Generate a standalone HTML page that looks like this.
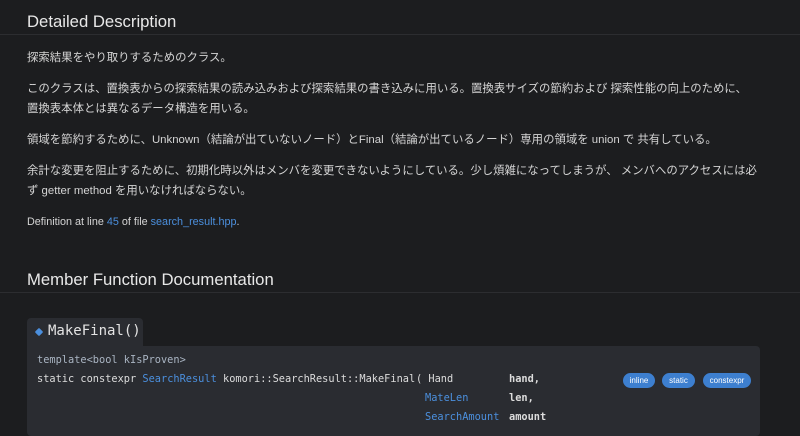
<!DOCTYPE html>
<html><head><meta charset="utf-8"><style>
body{margin:0;width:800px;height:421px;overflow:hidden;background:#1c1d1f;color:#d6d6d6;font-family:"Liberation Sans","Noto Sans CJK JP",sans-serif;position:relative}
.h{position:absolute;left:27px;font-size:16.7px;color:#e8e8e8}
.hl{position:absolute;left:0;width:800px;height:1px;background:#2c2d30}
.p{position:absolute;left:27px;font-size:11.4px;line-height:20px;color:#d4d4d4;white-space:nowrap}
a{color:#4b8fdd;text-decoration:none}
.tab{position:absolute;left:27px;top:318px;width:116px;height:29px;background:#2a2c31;border-radius:4px 4px 0 0;font-family:"DejaVu Sans Mono",monospace;font-size:14px;color:#e4e4e4}
.card{position:absolute;left:27px;top:346px;width:733px;height:90px;background:#2a2c31;border-radius:0 4px 4px 4px}
.m{position:absolute;font-family:"DejaVu Sans Mono",monospace;font-size:10.3px;color:#dcdcdc;white-space:pre}
.b{color:#4b8fdd}
.bd{position:absolute;top:373px;height:15px;border-radius:8px;background:#3d7fcf;color:#fff;font-size:8px;line-height:15px;text-align:center}
</style></head><body>
<div class="h" style="top:12px">Detailed Description</div>
<div class="hl" style="top:34px"></div>
<div class="p" style="top:48px">探索結果をやり取りするためのクラス。</div>
<div class="p" style="top:79px">このクラスは、置換表からの探索結果の読み込みおよび探索結果の書き込みに用いる。置換表サイズの節約および 探索性能の向上のために、<br>置換表本体とは異なるデータ構造を用いる。</div>
<div class="p" style="top:130px">領域を節約するために、Unknown（結論が出ていないノード）とFinal（結論が出ているノード）専用の領域を union で 共有している。</div>
<div class="p" style="top:161px">余計な変更を阻止するために、初期化時以外はメンバを変更できないようにしている。少し煩雑になってしまうが、 メンバへのアクセスには必<br>ず getter method を用いなければならない。</div>
<div class="p" style="top:212px;font-size:10.8px">Definition at line <a>45</a> of file <a>search_result.hpp</a>.</div>
<div class="h" style="top:270px">Member Function Documentation</div>
<div class="hl" style="top:292px"></div>
<div class="tab"><span style="position:absolute;left:9px;top:11px;width:6px;height:6px;background:#4b8fdd;transform:rotate(45deg);border-radius:1px"></span><span style="position:absolute;left:21px;top:5px">MakeFinal()</span></div>
<div class="card"></div>
<div class="m" style="left:37px;top:354px;color:#a9b4c2">template&lt;bool kIsProven&gt;</div>
<div class="m" style="left:37px;top:373px">static constexpr <span class="b">SearchResult</span> komori::SearchResult::MakeFinal</div>
<div class="m" style="left:416px;top:373px">( Hand</div>
<div class="m" style="left:509px;top:373px;font-weight:bold">hand,</div>
<div class="m b" style="left:425px;top:392px">MateLen</div>
<div class="m" style="left:509px;top:392px;font-weight:bold">len,</div>
<div class="m b" style="left:425px;top:411px">SearchAmount</div>
<div class="m" style="left:509px;top:411px;font-weight:bold">amount</div>
<div class="bd" style="left:623px;width:32px">inline</div>
<div class="bd" style="left:662px;width:33px">static</div>
<div class="bd" style="left:703px;width:48px">constexpr</div>
</body></html>
